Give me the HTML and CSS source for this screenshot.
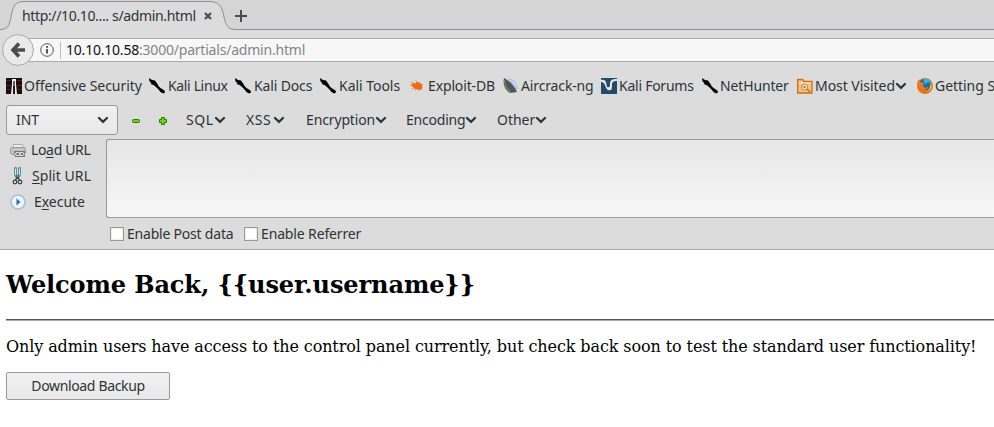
FILE: index.html
```html
<!DOCTYPE html>
<html lang="en">
<head>
<meta charset="utf-8">
<title>admin.html</title>
<link rel="stylesheet" href="styles.css">
</head>
<body>
<svg class="defs" width="0" height="0" aria-hidden="true">
  <symbol id="dragon" viewBox="0 0 16 16"><path d="M0 0l3 2 3 .5 1 1.500 1.500 2 1 2 2 2 4 2.500.5 2-2 1-2.500-1.500L9 11l-2-2-2.500-2-3-1 1-1L.5 3.500z" fill="#000"/></symbol>
  <symbol id="chev" viewBox="0 0 12 12"><path d="M2 4l4 3.800L10 4" fill="none" stroke="#31363a" stroke-width="2.300" stroke-linecap="round"/></symbol>
</svg>
<div class="chrome">
  <div class="tabs">
    <svg class="tabshape" width="994" height="30" viewBox="0 0 994 30"><path d="M-1 29.500C7 29.500 9 27 11 17C13 6 15 1.500 24 1.500H209C219 1.500 222 6 224 17C226 26 228 29.500 236 29.500H995V31H-1z" fill="#dcdcdc"/><path d="M0 29.500C7 29.500 9 27 11 17C13 6 15 1.500 24 1.500H209C219 1.500 222 6 224 17C226 26 228 29.500 236 29.500H995" fill="none" stroke="#8c9095"/></svg>
    <span class="tabtitle"><span class="t">http://10.10.... s/admin.html</span></span>
    <svg class="close" width="8" height="8" viewBox="0 0 8 8"><path d="M1 1l6 6M7 1L1 7" stroke="#4c4f50" stroke-width="2.400"/></svg>
    <svg class="new" width="12" height="12" viewBox="0 0 12 12"><path d="M6 0v12M0 6h12" stroke="#494c4d" stroke-width="2"/></svg>
  </div>
  <div class="nav">
    <svg class="back" width="32" height="32" viewBox="0 0 32 32"><circle cx="16" cy="16" r="15.400" fill="#eaeaea" stroke="#aaa"/><path d="M17 9.500L11 16l6 6.500M12 16h11" fill="none" stroke="#4a4d4e" stroke-width="3.600"/></svg>
    <div class="url">
      <svg width="14" height="14" viewBox="0 0 14 14"><circle cx="7" cy="7" r="6.300" fill="none" stroke="#555"/><path d="M7 6v4.500M7 3v1.800" stroke="#444" stroke-width="1.800"/></svg>
      <i></i><span class="addr t wide2"><b>10.10.10.58</b>:3000/partials/admin.html</span>
    </div>
  </div>
  <div class="bookmarks">
    <div><svg width="16" height="16" viewBox="0 0 16 16"><path d="M0 0h16v16H0z" fill="#1e0d0d"/><path d="M0 2.500h5M0 7.500h5M11 2.500h5M11 7.500h5M1 11.500h3M12 11.500h3" stroke="#4a2a28"/><path d="M6 1h4v5l1 10H9V8H7v8H5l1-10z" fill="#f0eeee"/><path d="M7.300 3h1.400v11H7.300z" fill="#252020"/></svg><span class="t wide4">Offensive Security</span></div>
    <div><svg width="16" height="16"><use href="#dragon"/></svg><span class="t">Kali Linux</span></div>
    <div><svg width="16" height="16"><use href="#dragon"/></svg><span class="t wide3">Kali Docs</span></div>
    <div><svg width="16" height="16"><use href="#dragon"/></svg><span class="t wide4">Kali Tools</span></div>
    <div><svg width="16" height="16" viewBox="0 0 16 16"><path d="M3 5l3 .5L8 4l3 1 2 2 .5 3-2 1.500H8L5 10 3 8z" fill="#ed6b16"/><path d="M2 4l4 3M1 7l5 1M3 11l4-2M6 12.500l2-3M10 13l1-3M13 12l-3-3M7 2.500l1 4M11 4l-2 3M14 6l-4 2" stroke="#ed6b16" stroke-width=".8"/></svg><span class="t wide3">Exploit-DB</span></div>
    <div><svg width="16" height="16" viewBox="0 0 16 16"><path d="M4 0c5 0 11 5 11 14C13 8 9 3 4 0z" fill="#eef4ff"/><path d="M5 .7c5 1 9 5 9.500 11M5 2c4 2 7 5 8 9" fill="none" stroke="#9dbdf0" stroke-width="1.200"/><path d="M1 0C-.5 6 2 12 7 15l7-1C12 9 7 3 1 0z" fill="#505650"/><path d="M1.500 2c0 5 2.500 9 6 12" fill="none" stroke="#7d8279" stroke-width="1.200"/></svg><span class="t wide3">Aircrack-ng</span></div>
    <div><svg width="16" height="16" viewBox="0 0 16 16"><path d="M0 0h16v16H0z" fill="#234d66"/><path d="M0 2c5-1 5 2 6 7 3 1 3-1 3-3 0-4 2-5 7-5v2c-4 0-5 1-5 4 0 5-1 6-4 5-3-1-2-8-7-8z" fill="#e4e9eb"/></svg><span class="t wide1">Kali Forums</span></div>
    <div><svg width="16" height="16"><use href="#dragon"/></svg><span class="t wide3">NetHunter</span></div>
    <div><svg width="16" height="16" viewBox="0 0 16 16"><path d="M.7 15V1.500h5l1.300 2h8V15z" fill="#f2c184" stroke="#cf6c16" stroke-width="1.300"/><path d="M2 5h12" stroke="#fff0d4"/><circle cx="7.500" cy="9" r="3" fill="#fff3df" stroke="#cf7930"/><circle cx="7.500" cy="9" r="1.200" fill="#cf6c16"/><path d="M10 11l3 3" stroke="#cf6c16" stroke-width="1.500"/></svg><span class="t wide4">Most Visited</span><svg class="bc" width="12" height="12"><use href="#chev"/></svg></div>
    <div><svg width="16" height="16" viewBox="0 0 16 16"><circle cx="8" cy="8" r="8" fill="#e77518"/><path d="M3 3a7 7 0 0 1 11 1c1 4-1 8-5 8s-6-4-6-9z" fill="#206eae"/><path d="M6 1c4-1 8 1 8 4l-3-1-3 2z" fill="#48afd9"/><path d="M0 5l2-4 1 3 4 1-1 3 2 2 3-1c-1 3-5 4-8 1z" fill="#ed781c"/><path d="M14 4c2 6-2 10-6 10 4 0 5-4 6-10z" fill="#fbd438"/></svg><span class="t wide4">Getting S</span></div>
  </div>
  <div class="tools">
    <div class="select"><span class="t wide4">INT</span><svg width="12" height="12"><use href="#chev"/></svg></div>
    <svg class="minus" width="10" height="10" viewBox="0 0 10 10"><rect x="1.500" y="4.500" width="7" height="3" rx="1" fill="#63d90d" stroke="#34740c"/></svg>
    <svg class="plus" width="10" height="10" viewBox="0 0 10 10"><path d="M3.500 2.500h3v2h2v3h-2v2h-3v-2h-2v-3h2z" fill="#63d90d" stroke="#34740c" stroke-linejoin="round"/></svg>
    <div class="menus">
      <div><span class="t wider">SQL</span><svg width="12" height="12"><use href="#chev"/></svg></div>
      <div><span class="t wider xss">XSS</span><svg width="12" height="12"><use href="#chev"/></svg></div>
      <div><span class="t wide3">Encryption</span><svg width="12" height="12"><use href="#chev"/></svg></div>
      <div><span class="t wide2">Encoding</span><svg width="12" height="12"><use href="#chev"/></svg></div>
      <div><span class="t wide4">Other</span><svg width="12" height="12"><use href="#chev"/></svg></div>
    </div>
  </div>
  <div class="hackbar">
    <div class="actions">
      <div class="load"><svg width="16" height="16" viewBox="0 0 16 16"><path d="M3.500 2.500h9l1 4h-11z" fill="#eee" stroke="#aaa"/><rect x=".5" y="5.500" width="15" height="7" rx="2" fill="#c4c4c4" stroke="#999"/><path d="M4 9h11v6H5z" fill="#777"/><rect x="5.500" y="10.500" width="4.500" height="3" rx="1.500" fill="none" stroke="#eee"/><rect x="9.500" y="10.500" width="4.500" height="3" rx="1.500" fill="none" stroke="#eee"/></svg><span class="t">Lo<u>a</u>d URL</span></div>
      <div class="split"><svg width="16" height="18" viewBox="0 0 16 18"><path d="M5.500 1.500v6l1.500 3M9.500 1.500v6L8 10.500" fill="none" stroke="#4e8794" stroke-width="2.800" stroke-linecap="round"/><path d="M5.500 1.500v6.500M9.500 1.500v6.500" stroke="#cfe9ee"/><path d="M7.500 10l-2 3M7.500 10l2 3" stroke="#383c3d" stroke-width="1.300"/><circle cx="5" cy="15" r="1.800" fill="none" stroke="#383c3d" stroke-width="1.200"/><circle cx="10" cy="15" r="1.800" fill="none" stroke="#383c3d" stroke-width="1.200"/></svg><span class="t wide5"><u>S</u>plit URL</span></div>
      <div class="exec"><svg width="16" height="16" viewBox="0 0 16 16"><circle cx="8" cy="8" r="7" fill="#edf4fc" stroke="#a5bfdf" stroke-width="1.600"/><path d="M6.500 4.500L10.500 8l-4 3.500z" fill="#2c69b3"/></svg><span class="t wide4">E<u>x</u>ecute</span></div>
    </div>
    <div class="entry"></div>
  </div>
  <div class="checks">
    <div><i></i><span class="t wide2">Enable Post data</span></div>
    <div><i></i><span class="t wide3">Enable Referrer</span></div>
  </div>
</div>
<main>
  <h2>Welcome Back, {{user.username}}</h2>
  <hr>
  <p>Only admin users have access to the control panel currently, but check back soon to test the standard user functionality!</p>
  <button><span class="t">Download Backup</span></button>
</main>
</body>
</html>
```
FILE: styles.css
```css
* { box-sizing: border-box; }
body { margin: 0; width: 994px; height: 427px; overflow: hidden; background: #fff; }
svg { flex: none; display: block; }
.defs { position: absolute; }
.chrome { height: 250px; background: #dcdcdc; border-bottom: 1px solid #aaa; overflow: hidden; font: 14px/20px "Noto Sans", sans-serif; color: #2e3436; }
.t { white-space: pre; letter-spacing: -0.35px; }
.t.wide1 { letter-spacing: -0.25px; }
.t.wide2 { letter-spacing: -0.21px; }
.t.wide3 { letter-spacing: -0.14px; }
.t.wide4 { letter-spacing: -0.04px; }
.t.wide5 { letter-spacing: 0.06px; }
.t.wider { letter-spacing: 0.6px; }
.xss { margin-right: 2px; }
.tabs { position: relative; height: 30px; display: flex; align-items: center; background: #d5d5d5; padding: 2px 0 0 22px; }
.tabshape { position: absolute; left: 0; top: 0; }
.tabtitle, .close, .new { position: relative; }
.tabtitle { width: 182px; }
.new { margin-left: 23px; }
.nav { height: 40px; display: flex; align-items: center; padding-left: 2px; }
.back { position: relative; z-index: 1; }
.url { flex: 1; height: 24px; margin-left: -7px; padding-left: 13px; display: flex; align-items: center; background: #f7f7f7; border: solid #aaa; border-width: 1px 0; }
.url i { width: 1px; height: 17px; background: #bbb; margin: 0 5px 0 6px; }
.addr { color: #858585; }
.addr b { color: #111; font-weight: 400; }
.bookmarks { height: 32px; padding-left: 6px; display: grid; grid-template-columns: 143px 86px 85px 89px 94px 98px 101px 95px 120px 130px; align-items: center; }
.bookmarks div { display: flex; align-items: center; gap: 2px; }
.bookmarks div:nth-child(n+2):nth-child(-n+5) { gap: 3px; }
.bookmarks .bc { margin-left: -2px; }
.tools { height: 36px; padding-left: 6px; display: flex; align-items: center; }
.select { width: 112px; height: 30px; display: flex; align-items: center; justify-content: space-between; padding: 0 8px 0 9px; border: 1px solid #999; border-radius: 3px; background: linear-gradient(#f1f1f1, #e8e8e8); }
.minus { margin-left: 13px; }
.plus { margin-left: 17px; }
.menus { margin-left: 18px; display: grid; grid-template-columns: 60px 60px 100px 91px 60px; }
.menus div { display: flex; align-items: center; }
.hackbar { display: flex; height: 80px; }
.actions { width: 106px; padding-left: 10px; }
.actions div { display: flex; align-items: center; height: 26px; }
.actions div:first-child { margin-top: -1px; }
.actions .t { margin-left: 5px; line-height: 18px; }
.actions .split .t { margin-left: 6px; }
.actions .exec .t { margin-left: 8px; }
.actions u { text-underline-offset: 2px; }
.entry { flex: 1; height: 79px; margin-top: 1px; border: 1px solid #999; border-right: 0; border-radius: 3px 0 0 3px; background: linear-gradient(#e6e6e6, #f7f7f7); }
.checks { display: flex; padding: 6px 0 0 110px; }
.checks div { width: 134px; display: flex; align-items: center; gap: 3px; }
.checks i { width: 14px; height: 14px; border: 1px solid #999; background: #fff; box-shadow: inset 0 0 0 1px #eee; }
main { padding: 20px 0 0 6px; font: 16px/20px "DejaVu Serif", serif; color: #000; }
h2 { margin: 0; font-size: 24px; line-height: 29px; white-space: nowrap; letter-spacing: -0.1px; }
hr { margin: 20px 0 0; border: 0; height: 2px; background: linear-gradient(#555 50%, #aaa 50%); }
p { margin: 16px 0 0; white-space: nowrap; letter-spacing: -0.1px; }
button { display: block; width: 164px; height: 28px; margin-top: 15px; padding: 0; border: 1px solid #999; border-radius: 2px; background: linear-gradient(#f1f1f1, #e8e8e8); color: #2e3436; font: 14px/20px "Noto Sans", sans-serif; }
```
